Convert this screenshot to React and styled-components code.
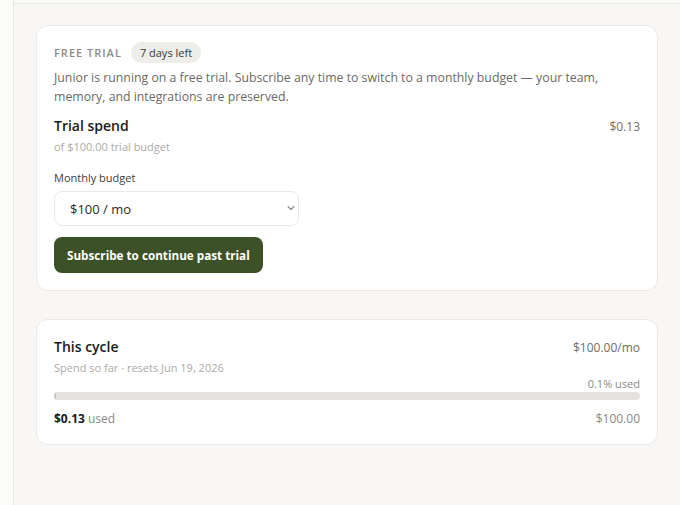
import React from 'react';
import styled, { createGlobalStyle } from 'styled-components';

const GlobalStyle = createGlobalStyle`
  html, body {
    margin: 0;
    padding: 0;
    background: #f8f7f5;
  }
  body {
    font-family: 'Open Sans', 'Liberation Sans', sans-serif;
    color: #1b1b1b;
  }
  * {
    box-sizing: border-box;
  }
`;

const plan = {
  daysLeft: 7,
  trialSpend: 0.13,
  trialBudget: 100,
  monthly: 100,
  resets: 'Jun 19, 2026',
};

const money = (n) => `$${n.toFixed(2)}`;

const Billing = () => {
  const usedPct = (plan.trialSpend / plan.monthly) * 100;

  return (
    <LayoutStyled>
      <SidebarStyled />
      <MainStyled>
        <TopBarStyled />
        <ContentStyled>
          <CardStyled>
            <TagRowStyled>
              <EyebrowStyled>Free trial</EyebrowStyled>
              <BadgeStyled>{plan.daysLeft} days left</BadgeStyled>
            </TagRowStyled>
            <LeadStyled>
              Junior is running on a free trial. Subscribe any time to switch to a monthly budget — your team,
              memory, and integrations are preserved.
            </LeadStyled>

            <HeadRowStyled>
              <TitleStyled>Trial spend</TitleStyled>
              <AmountStyled>{money(plan.trialSpend)}</AmountStyled>
            </HeadRowStyled>
            <HintStyled>of {money(plan.trialBudget)} trial budget</HintStyled>

            <FieldLabelStyled htmlFor="budget">Monthly budget</FieldLabelStyled>
            <SelectWrapStyled>
              <SelectStyled id="budget" defaultValue="100">
                <option value="50">$50 / mo</option>
                <option value="100">$100 / mo</option>
                <option value="250">$250 / mo</option>
              </SelectStyled>
              <ChevronStyled width="10" height="10" viewBox="0 0 10 10">
                <path d="M2 3.5 L5 6.5 L8 3.5" fill="none" stroke="#8a8a8a" strokeWidth="1.1" strokeLinecap="round" strokeLinejoin="round" />
              </ChevronStyled>
            </SelectWrapStyled>

            <ButtonStyled type="button">Subscribe to continue past trial</ButtonStyled>
          </CardStyled>

          <CardStyled>
            <HeadRowStyled>
              <TitleStyled>This cycle</TitleStyled>
              <AmountStyled>{money(plan.monthly)}/mo</AmountStyled>
            </HeadRowStyled>
            <HintStyled>Spend so far · resets {plan.resets}</HintStyled>

            <PctStyled>{usedPct.toFixed(1)}% used</PctStyled>
            <BarStyled>
              <BarFillStyled style={{ width: `${Math.max(usedPct, 0.4)}%` }} />
            </BarStyled>
            <FootRowStyled>
              <span>
                <StrongStyled>{money(plan.trialSpend)}</StrongStyled> used
              </span>
              <span>{money(plan.monthly)}</span>
            </FootRowStyled>
          </CardStyled>
        </ContentStyled>
      </MainStyled>
    </LayoutStyled>
  );
};

const LayoutStyled = styled.div`
  display: flex;
  min-height: 505px;
`;

const SidebarStyled = styled.aside`
  width: 14px;
  flex-shrink: 0;
  background: #fbfbfa;
  border-right: 1px solid #e9e7e4;
`;

const MainStyled = styled.main`
  flex: 1;
  display: flex;
  flex-direction: column;
`;

const TopBarStyled = styled.div`
  height: 4px;
  background: #fbfbfa;
  border-bottom: 1px solid #ebe9e6;
`;

const ContentStyled = styled.div`
  display: flex;
  flex-direction: column;
  gap: 28px;
  padding: 21px 22px;
`;

const CardStyled = styled.section`
  display: flex;
  flex-direction: column;
  background: #fff;
  border: 1px solid #ece9e6;
  border-radius: 12px;
  padding: 16px 17px 17px;
`;

const TagRowStyled = styled.div`
  display: flex;
  align-items: center;
  gap: 9px;
`;

const EyebrowStyled = styled.span`
  font-size: 11px;
  font-weight: 600;
  letter-spacing: 1px;
  text-transform: uppercase;
  color: #8d8b88;
`;

const BadgeStyled = styled.span`
  display: inline-flex;
  align-items: center;
  height: 21px;
  padding: 0 9px;
  border-radius: 11px;
  background: #eeede9;
  font-size: 11px;
  font-weight: 500;
  color: #3a3a38;
`;

const LeadStyled = styled.p`
  margin: 5px 0 0;
  font-size: 12.3px;
  line-height: 19px;
  color: #6b6a67;
`;

const HeadRowStyled = styled.div`
  display: flex;
  justify-content: space-between;
  align-items: baseline;
  margin-top: 10px;

  &:first-child {
    margin-top: 1px;
  }
`;

const TitleStyled = styled.h3`
  margin: 0;
  font-size: 14px;
  font-weight: 600;
  color: #1a1a1a;
`;

const AmountStyled = styled.span`
  font-size: 12px;
  color: #6e6d6a;
`;

const HintStyled = styled.div`
  margin-top: 4px;
  font-size: 11px;
  color: #acaaa7;
`;

const FieldLabelStyled = styled.label`
  margin-top: 16px;
  font-size: 11px;
  font-weight: 500;
  color: #3e3d3b;
`;

const SelectWrapStyled = styled.div`
  position: relative;
  width: 245px;
  margin-top: 6px;
`;

const SelectStyled = styled.select`
  appearance: none;
  width: 100%;
  height: 35px;
  padding: 0 30px 0 15px;
  border: 1px solid #ebe9e6;
  border-radius: 8px;
  background: #fff;
  font-family: inherit;
  font-size: 13px;
  color: #2a2a28;
  outline: none;
`;

const ChevronStyled = styled.svg`
  position: absolute;
  right: 3px;
  top: 12px;
  pointer-events: none;
`;

const ButtonStyled = styled.button`
  align-self: flex-start;
  margin-top: 11px;
  height: 36px;
  padding: 0 13px;
  border: none;
  border-radius: 8px;
  background: #3c5127;
  font-family: inherit;
  font-size: 11.7px;
  font-weight: 700;
  color: #fff;
  cursor: pointer;
`;

const PctStyled = styled.div`
  margin-top: 1px;
  align-self: flex-end;
  font-size: 11px;
  color: #8a8986;
`;

const BarStyled = styled.div`
  margin-top: 1px;
  height: 8px;
  border-radius: 4px;
  background: #e4e3e0;
  overflow: hidden;
`;

const BarFillStyled = styled.div`
  height: 100%;
  background: #c9c8c4;
`;

const FootRowStyled = styled.div`
  display: flex;
  justify-content: space-between;
  margin-top: 10px;
  font-size: 12px;
  color: #8a8986;
`;

const StrongStyled = styled.strong`
  font-weight: 700;
  color: #1a1a1a;
`;

export default function App() {
  return (
    <>
      <GlobalStyle />
      <Billing />
    </>
  );
}
